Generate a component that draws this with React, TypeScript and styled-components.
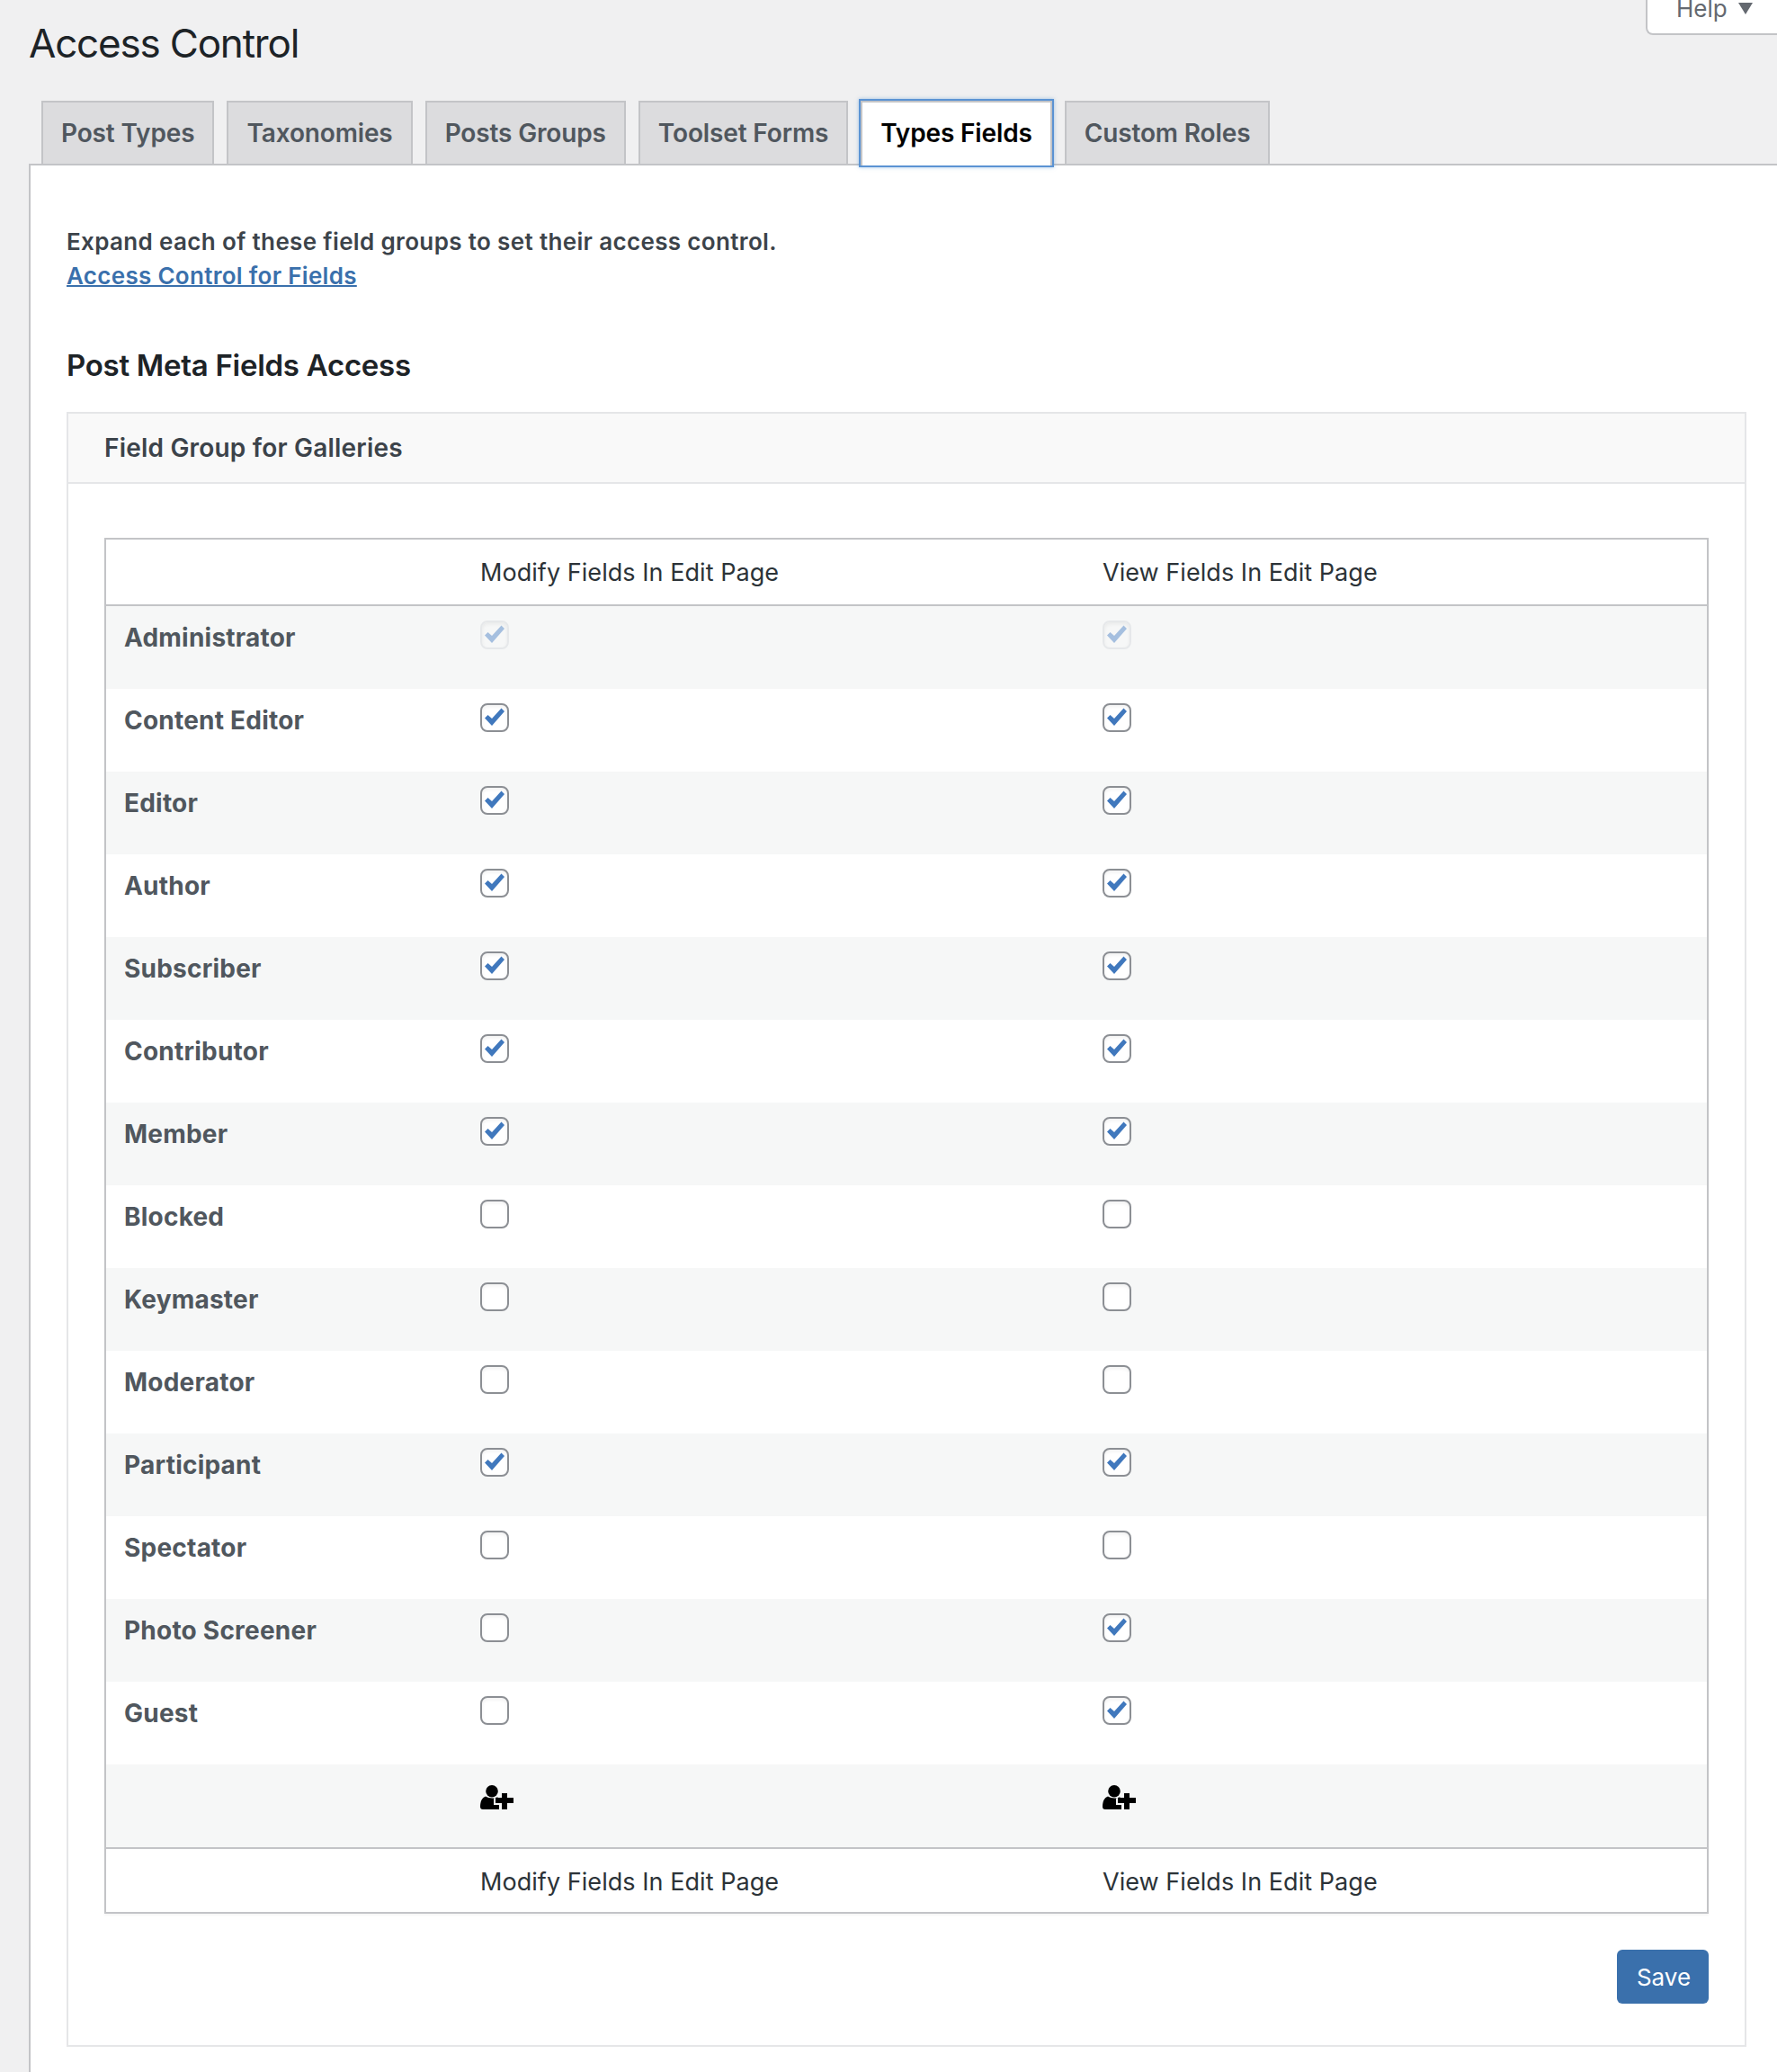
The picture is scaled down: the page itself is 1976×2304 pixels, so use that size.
import * as React from 'react';
import styled, { createGlobalStyle } from 'styled-components';

const GlobalStyle = createGlobalStyle`
    html, body {
        margin: 0;
        padding: 0;
        background: #f0f0f1;
    }

    body {
        width: 1976px;
        height: 2304px;
        overflow: hidden;
        font-family: Inter, "Liberation Sans", sans-serif;
        color: #3c434a;
    }
`;

const Page = styled.div`
    height: 2304px;
    padding-left: 32px;
    box-sizing: border-box;
    display: flex;
    flex-direction: column;
`;

const Header = styled.header`
    display: flex;
    justify-content: space-between;
    align-items: flex-start;
    height: 112px;
`;

const Title = styled.h1`
    margin: 20px 0 0;
    font-size: 44px;
    font-weight: 400;
    line-height: 56px;
    letter-spacing: -1.2px;
    color: #1d2327;
`;

const HelpButton = styled.div`
    display: flex;
    align-items: center;
    gap: 12px;
    width: 146px;
    height: 59px;
    margin-top: -20px;
    padding-left: 32px;
    box-sizing: border-box;
    background: #fff;
    border: 2px solid #c3c4c7;
    border-right: 0;
    border-radius: 0 0 0 8px;
    font-size: 26px;
    color: #646970;
`;

const Arrow = styled.span`
    width: 0;
    height: 0;
    border-left: 8px solid transparent;
    border-right: 8px solid transparent;
    border-top: 13px solid #646970;
`;

const Tabs = styled.nav`
    display: flex;
    gap: 14px;
    height: 72px;
    padding-left: 14px;
    box-sizing: border-box;
    border-bottom: 2px solid #c3c4c7;
`;

const Tab = styled.a<{ $active?: boolean }>`
    height: 72px;
    padding: 10px 20px;
    box-sizing: border-box;
    background: ${p => (p.$active ? '#fff' : '#dcdcde')};
    border: 2px solid #c3c4c7;
    border-bottom: ${p => (p.$active ? '0' : '2px solid #c3c4c7')};
    font-size: 28px;
    font-weight: 600;
    line-height: 48px;
    letter-spacing: -0.14px;
    color: ${p => (p.$active ? '#000' : '#50575e')};
    white-space: nowrap;
    position: relative;
    box-shadow: ${p => (p.$active ? '0 0 0 2px #5b93d3, 0 0 4px 2px rgba(79, 148, 212, 0.5)' : 'none')};
`;

const Panel = styled.main`
    flex: 1;
    padding: 66px 34px 0 40px;
    background: #fff;
    border-left: 2px solid #c3c4c7;
`;

const Intro = styled.p`
    margin: 0;
    font-size: 26px;
    font-weight: 600;
    line-height: 38px;
    letter-spacing: 0.35px;
`;

const DocLink = styled.a`
    font-size: 26px;
    font-weight: 600;
    line-height: 38px;
    letter-spacing: 0.3px;
    color: #3a70ac;
    text-decoration: underline;
    text-decoration-thickness: 2px;
`;

const SectionTitle = styled.h2`
    margin: 58px 0 0;
    font-size: 33px;
    font-weight: 600;
    line-height: 44px;
    letter-spacing: -0.28px;
    color: #1d2327;
`;

const GroupBox = styled.section`
    width: 1868px;
    height: 1818px;
    margin-top: 30px;
    box-sizing: border-box;
    border: 2px solid #e5e6e8;
`;

const GroupTitle = styled.h3`
    margin: 0;
    height: 78px;
    padding: 0 40px;
    display: flex;
    align-items: center;
    box-sizing: border-box;
    background: #f9f9f9;
    border-bottom: 2px solid #e5e6e8;
    font-size: 28px;
    font-weight: 600;
    letter-spacing: 0.2px;
    color: #3c434a;
`;

const GroupBody = styled.div`
    padding: 60px 40px 0;
`;

const Table = styled.table`
    width: 1784px;
    table-layout: fixed;
    border-collapse: separate;
    border-spacing: 0;
    border: 2px solid #c3c4c7;
    box-shadow: 0 2px 2px rgba(0, 0, 0, 0.04);
`;

const HeadCell = styled.th<{ $bottom?: boolean }>`
    height: ${p => (p.$bottom ? '72px' : '74px')};
    padding: ${p => (p.$bottom ? '2px 20px 0' : '0 20px')};
    box-sizing: border-box;
    border-bottom: ${p => (p.$bottom ? '0' : '2px solid #c3c4c7')};
    border-top: ${p => (p.$bottom ? '2px solid #c3c4c7' : '0')};
    font-size: 27px;
    font-weight: 400;
    letter-spacing: 0.05px;
    text-align: left;
    color: #2c3338;
`;

const Row = styled.tr<{ $striped: boolean }>`
    background: ${p => (p.$striped ? '#f6f7f7' : '#fff')};
`;

const RoleCell = styled.td`
    height: 92px;
    padding: 16px 20px 0;
    box-sizing: border-box;
    vertical-align: top;
    font-size: 28px;
    font-weight: 700;
    line-height: 38px;
    letter-spacing: 0.22px;
    color: #50575e;
`;

const ValueCell = styled.td`
    height: 92px;
    padding: 16px 20px 0;
    box-sizing: border-box;
    vertical-align: top;
    line-height: 0;
`;

const CheckBox = styled.span<{ $disabled?: boolean }>`
    display: inline-block;
    width: 32px;
    height: 32px;
    box-sizing: border-box;
    border: 2px solid ${p => (p.$disabled ? '#e6e8ea' : '#8c8f94')};
    border-radius: 8px;
    background: ${p => (p.$disabled ? '#f6f7f7' : '#fff')};
    box-shadow: inset 0 2px 4px rgba(0, 0, 0, 0.06);

    svg {
        display: block;
        width: 28px;
        height: 28px;
        fill: ${p => (p.$disabled ? '#a5bfdf' : '#4078bd')};
    }
`;

const AddIcon = styled.svg`
    display: block;
    width: 38px;
    height: 28px;
    margin-top: 7px;
    fill: #000;
`;

const Actions = styled.div`
    display: flex;
    justify-content: flex-end;
    margin-top: 40px;
`;

const SaveButton = styled.button`
    width: 102px;
    height: 60px;
    padding: 0 0 0 2px;
    border: 0;
    border-radius: 6px;
    background: #3a70ac;
    font-family: inherit;
    font-size: 26px;
    color: #fff;
`;

const tabs = ['Post Types', 'Taxonomies', 'Posts Groups', 'Toolset Forms', 'Types Fields', 'Custom Roles'];

const roles: { name: string; modify: boolean; view: boolean; disabled?: boolean }[] = [
    { name: 'Administrator', modify: true, view: true, disabled: true },
    { name: 'Content Editor', modify: true, view: true },
    { name: 'Editor', modify: true, view: true },
    { name: 'Author', modify: true, view: true },
    { name: 'Subscriber', modify: true, view: true },
    { name: 'Contributor', modify: true, view: true },
    { name: 'Member', modify: true, view: true },
    { name: 'Blocked', modify: false, view: false },
    { name: 'Keymaster', modify: false, view: false },
    { name: 'Moderator', modify: false, view: false },
    { name: 'Participant', modify: true, view: true },
    { name: 'Spectator', modify: false, view: false },
    { name: 'Photo Screener', modify: false, view: true },
    { name: 'Guest', modify: false, view: true },
];

const Check: React.FC<{ checked: boolean; disabled?: boolean }> = ({ checked, disabled }) => (
    <CheckBox $disabled={disabled}>
        {checked && (
            <svg viewBox="0 0 28 28">
                <path d="M3 14.500L6.500 11l4.500 4L21.500 3.500 25 7 11 23z" />
            </svg>
        )}
    </CheckBox>
);

const UserPlus: React.FC = () => (
    <AddIcon viewBox="0 0 38 28">
        <circle cx="13" cy="6.800" r="6.800" />
        <path d="M0 24c0-6 2-10 6-11.500 3 2.500 11 2.500 14 .5l-1 1h-4v8h6v5H3c-2 0-3-1-3-3z" />
        <path d="M24 9h6v5h7v6h-7v7h-6v-7h-7v-6h7z" />
    </AddIcon>
);

const App: React.FC = () => (
    <Page>
        <GlobalStyle />
        <Header>
            <Title>Access Control</Title>
            <HelpButton>
                Help <Arrow />
            </HelpButton>
        </Header>
        <Tabs>
            {tabs.map(tab => (
                <Tab key={tab} $active={tab === 'Types Fields'}>
                    {tab}
                </Tab>
            ))}
        </Tabs>
        <Panel>
            <Intro>Expand each of these field groups to set their access control.</Intro>
            <DocLink href="#">Access Control for Fields</DocLink>
            <SectionTitle>Post Meta Fields Access</SectionTitle>
            <GroupBox>
                <GroupTitle>Field Group for Galleries</GroupTitle>
                <GroupBody>
                    <Table>
                        <colgroup>
                            <col style={{ width: 396 }} />
                            <col style={{ width: 692 }} />
                            <col />
                        </colgroup>
                        <thead>
                            <tr>
                                <HeadCell />
                                <HeadCell>Modify Fields In Edit Page</HeadCell>
                                <HeadCell>View Fields In Edit Page</HeadCell>
                            </tr>
                        </thead>
                        <tbody>
                            {roles.map((role, i) => (
                                <Row key={role.name} $striped={i % 2 === 0}>
                                    <RoleCell>{role.name}</RoleCell>
                                    <ValueCell>
                                        <Check checked={role.modify} disabled={role.disabled} />
                                    </ValueCell>
                                    <ValueCell>
                                        <Check checked={role.view} disabled={role.disabled} />
                                    </ValueCell>
                                </Row>
                            ))}
                            <Row $striped>
                                <RoleCell />
                                <ValueCell>
                                    <UserPlus />
                                </ValueCell>
                                <ValueCell>
                                    <UserPlus />
                                </ValueCell>
                            </Row>
                        </tbody>
                        <tfoot>
                            <tr>
                                <HeadCell $bottom />
                                <HeadCell $bottom>Modify Fields In Edit Page</HeadCell>
                                <HeadCell $bottom>View Fields In Edit Page</HeadCell>
                            </tr>
                        </tfoot>
                    </Table>
                    <Actions>
                        <SaveButton>Save</SaveButton>
                    </Actions>
                </GroupBody>
            </GroupBox>
        </Panel>
    </Page>
);

export default App;
